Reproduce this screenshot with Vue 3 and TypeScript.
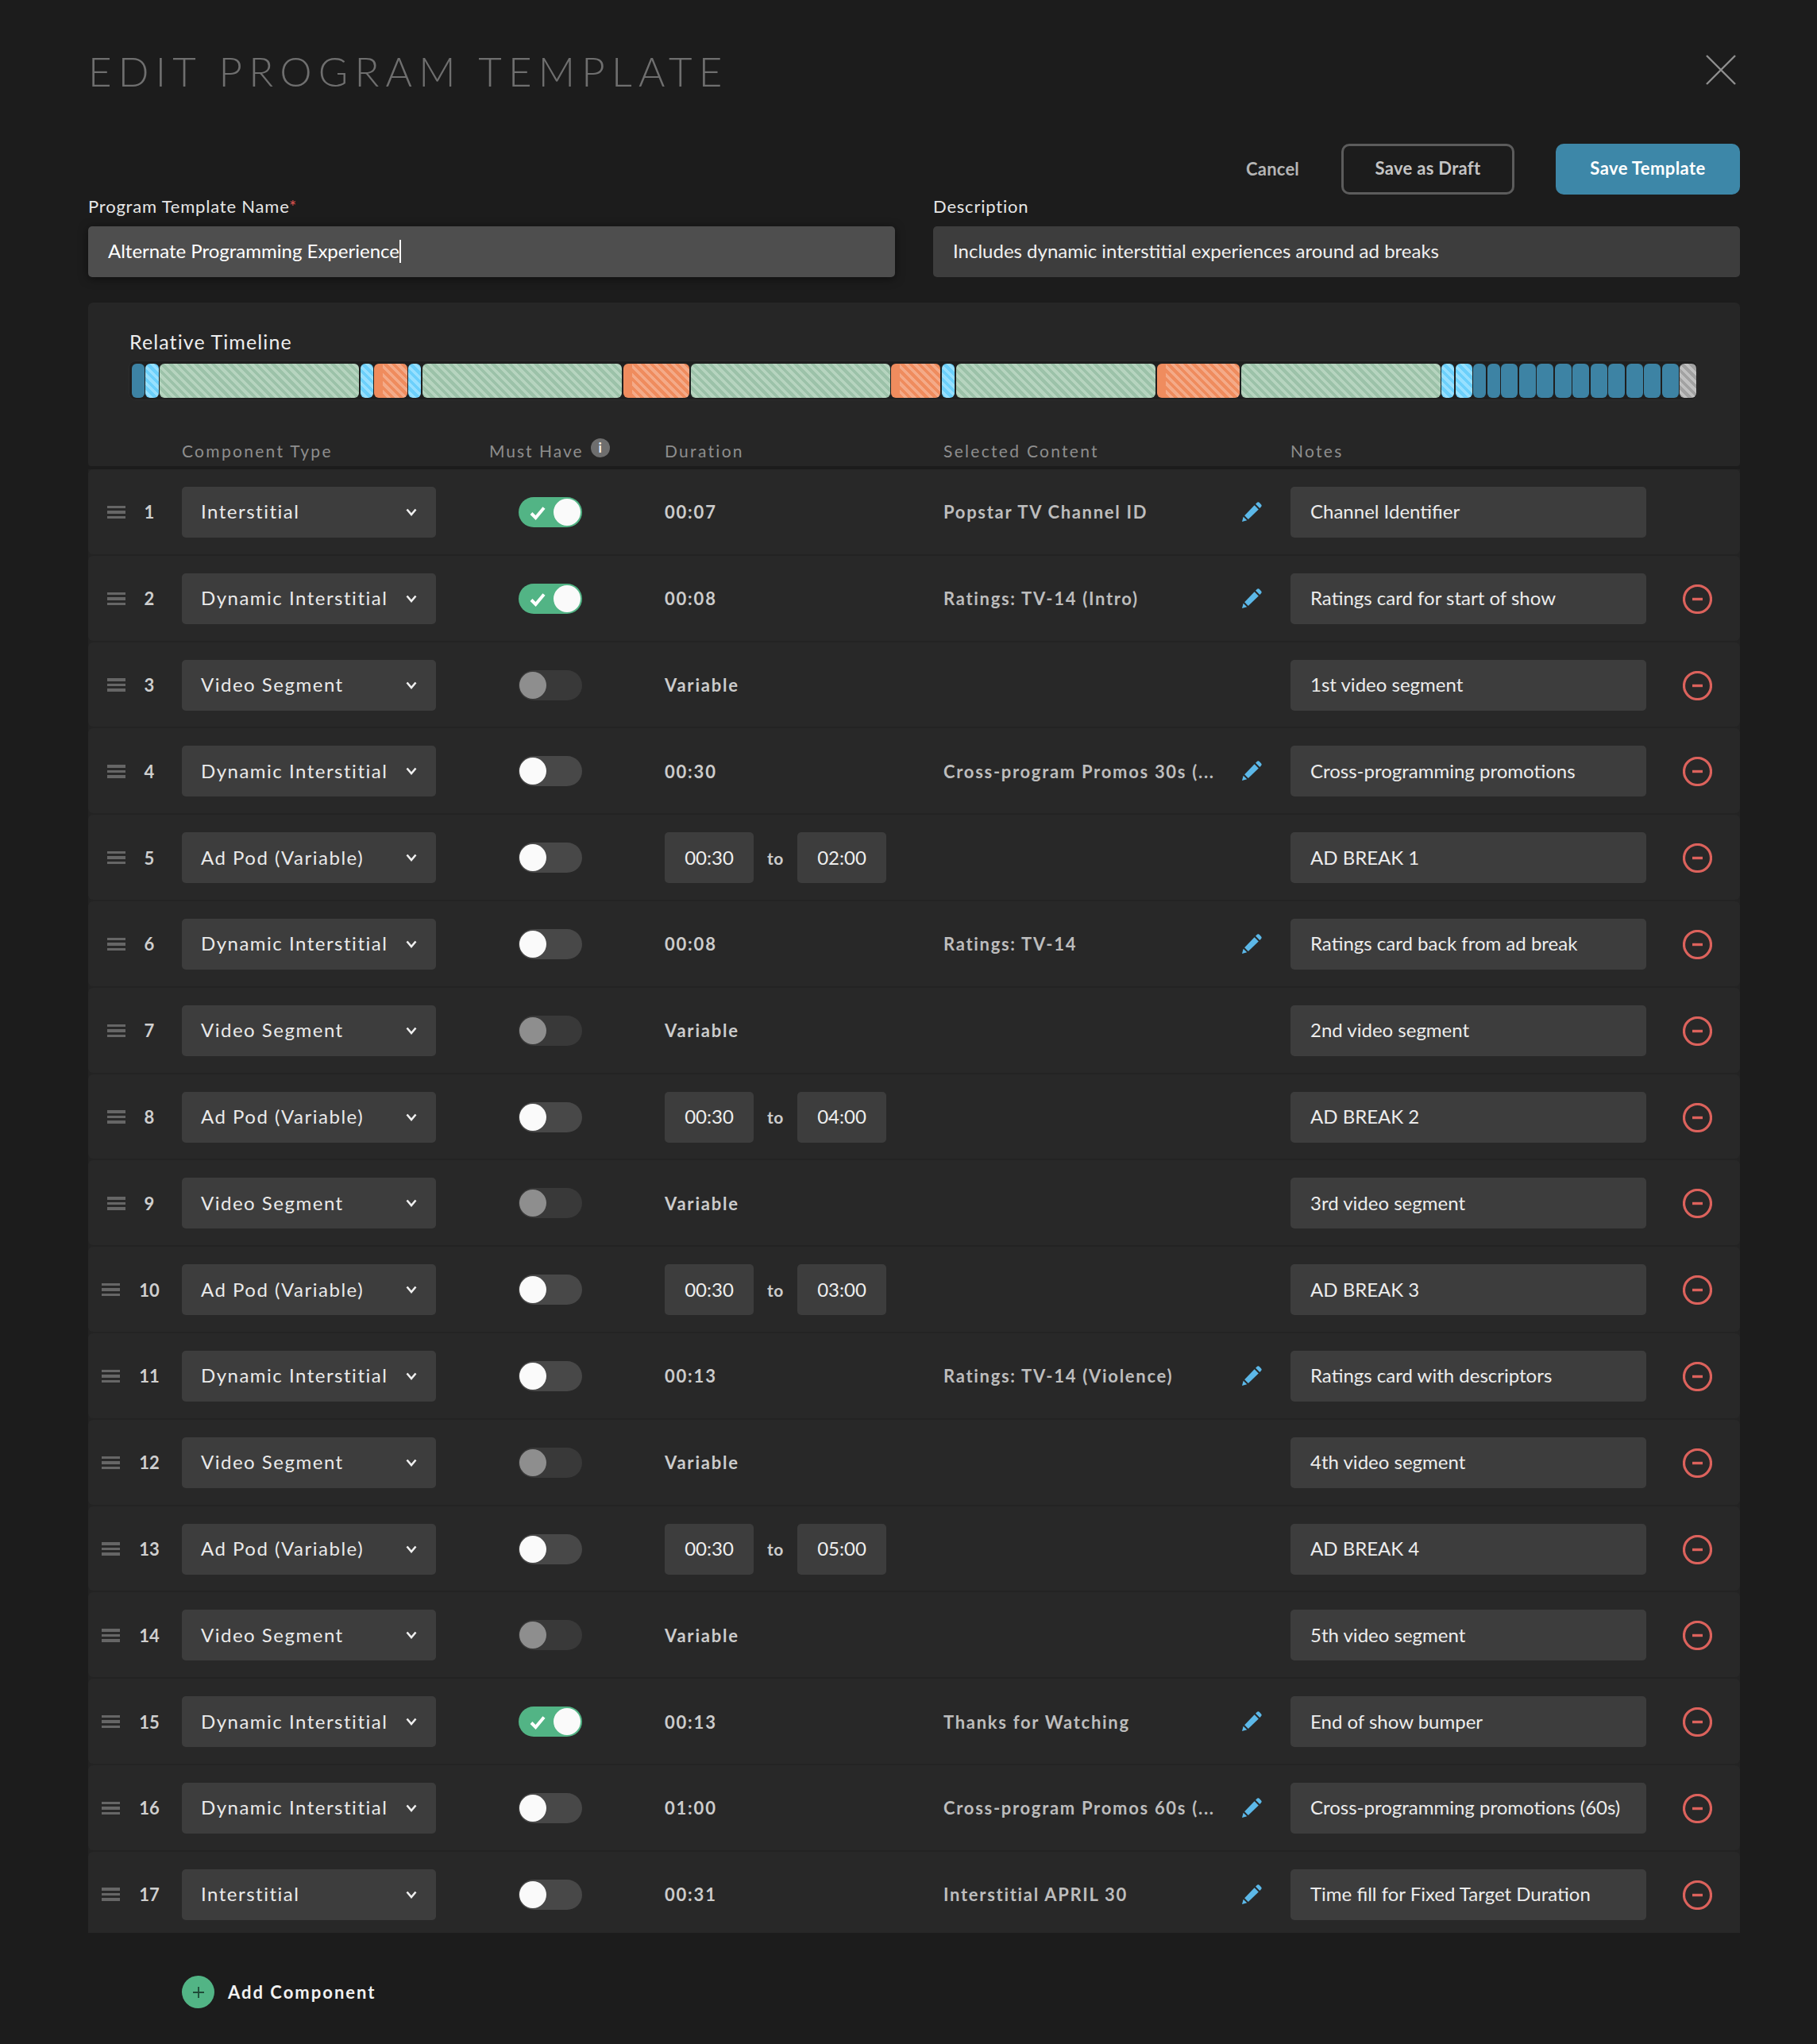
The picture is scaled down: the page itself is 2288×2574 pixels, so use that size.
<script setup lang="ts">
type Toggle = 'on' | 'off' | 'dim'
interface Row {
  type: string
  toggle: Toggle
  dur?: string
  range?: [string, string]
  content?: string
  note: string
  locked?: boolean
}
const rows: Row[] = [
  { type: 'Interstitial', toggle: 'on', dur: '00:07', content: 'Popstar TV Channel ID', note: 'Channel Identifier', locked: true },
  { type: 'Dynamic Interstitial', toggle: 'on', dur: '00:08', content: 'Ratings: TV-14 (Intro)', note: 'Ratings card for start of show' },
  { type: 'Video Segment', toggle: 'dim', dur: 'Variable', note: '1st video segment' },
  { type: 'Dynamic Interstitial', toggle: 'off', dur: '00:30', content: 'Cross-program Promos 30s (...', note: 'Cross-programming promotions' },
  { type: 'Ad Pod (Variable)', toggle: 'off', range: ['00:30', '02:00'], note: 'AD BREAK 1' },
  { type: 'Dynamic Interstitial', toggle: 'off', dur: '00:08', content: 'Ratings: TV-14', note: 'Ratings card back from ad break' },
  { type: 'Video Segment', toggle: 'dim', dur: 'Variable', note: '2nd video segment' },
  { type: 'Ad Pod (Variable)', toggle: 'off', range: ['00:30', '04:00'], note: 'AD BREAK 2' },
  { type: 'Video Segment', toggle: 'dim', dur: 'Variable', note: '3rd video segment' },
  { type: 'Ad Pod (Variable)', toggle: 'off', range: ['00:30', '03:00'], note: 'AD BREAK 3' },
  { type: 'Dynamic Interstitial', toggle: 'off', dur: '00:13', content: 'Ratings: TV-14 (Violence)', note: 'Ratings card with descriptors' },
  { type: 'Video Segment', toggle: 'dim', dur: 'Variable', note: '4th video segment' },
  { type: 'Ad Pod (Variable)', toggle: 'off', range: ['00:30', '05:00'], note: 'AD BREAK 4' },
  { type: 'Video Segment', toggle: 'dim', dur: 'Variable', note: '5th video segment' },
  { type: 'Dynamic Interstitial', toggle: 'on', dur: '00:13', content: 'Thanks for Watching', note: 'End of show bumper' },
  { type: 'Dynamic Interstitial', toggle: 'off', dur: '01:00', content: 'Cross-program Promos 60s (...', note: 'Cross-programming promotions (60s)' },
  { type: 'Interstitial', toggle: 'off', dur: '00:31', content: 'Interstitial APRIL 30', note: 'Time fill for Fixed Target Duration' }
]
// [start, end, kind] in page pixels, taken from the timeline's scale
const spans: [number, number, string][] = [
  [166, 182, 'b'], [183, 200, 'l'], [201, 452, 'g'], [454, 470, 'l'], [471, 513, 'o'], [514, 530, 'l'],
  [532, 783, 'g'], [785, 868, 'o'], [870, 1121, 'g'], [1122, 1184, 'o'], [1186, 1202, 'l'], [1204, 1455, 'g'],
  [1457, 1561, 'o'], [1563, 1814, 'g'], [1815, 1831, 'l'], [1833, 1854, 'l'], [1855, 1871, 'b'], [1873, 1889, 'b'],
  [1890, 1911, 'b'], [1913, 1934, 'b'], [1935, 1956, 'b'], [1958, 1979, 'b'], [1980, 2001, 'b'], [2003, 2024, 'b'],
  [2025, 2046, 'b'], [2048, 2069, 'b'], [2070, 2091, 'b'], [2093, 2114, 'b'], [2115, 2136, 'a']
]
const segments = spans.map(([s, e, kind], i) => ({
  kind,
  style: { width: `${e - s}px`, marginLeft: `${i === 0 ? 0 : s - spans[i - 1][1]}px` }
}))
</script>

<template>
  <div class="page">
    <header class="titlebar">
      <h1 class="title">EDIT PROGRAM TEMPLATE</h1>
      <svg class="close" viewBox="0 0 38 38" width="38" height="38" fill="none" stroke="#8f8f8f" stroke-width="2.4">
        <path d="M1 1 37 37M37 1 1 37" />
      </svg>
    </header>

    <div class="actions">
      <span class="cancel">Cancel</span>
      <button class="btn draft">Save as Draft</button>
      <button class="btn save">Save Template</button>
    </div>

    <section class="fields">
      <div class="field">
        <label class="label">Program Template Name<span class="req">*</span></label>
        <div class="input focused"><span class="itext">Alternate Programming Experience</span><span class="caret"></span></div>
      </div>
      <div class="field">
        <label class="label">Description</label>
        <div class="input"><span class="itext">Includes dynamic interstitial experiences around ad breaks</span></div>
      </div>
    </section>

    <section class="panel">
      <div class="tl-label">Relative Timeline</div>
      <div class="timeline">
        <span v-for="(s, i) in segments" :key="i" class="seg" :class="s.kind" :style="s.style"></span>
      </div>
      <div class="cols heads">
        <span></span>
        <span>Component Type</span>
        <span class="must">Must Have <i class="info">i</i></span>
        <span>Duration</span>
        <span>Selected Content</span>
        <span>Notes</span>
        <span></span>
      </div>
    </section>

    <section class="rows">
      <div v-for="(r, i) in rows" :key="i" class="cols row">
        <div class="grip">
          <span class="bars"><b></b><b></b><b></b></span>
          <span class="num">{{ i + 1 }}</span>
        </div>
        <div class="select">
          <span class="itext">{{ r.type }}</span>
          <svg viewBox="0 0 14 10" width="14" height="10" fill="none" stroke="#f0f0f0" stroke-width="2.6">
            <path d="M1.5 1.5 7 8l5.500-6.500" />
          </svg>
        </div>
        <div class="tcell">
          <div class="toggle" :class="r.toggle">
            <svg v-if="r.toggle === 'on'" class="check" viewBox="0 0 20 18" width="20" height="18" fill="none" stroke="#fff" stroke-width="4">
              <path d="M2 9.500 7.500 15 18 2.500" />
            </svg>
            <span class="knob"></span>
          </div>
        </div>
        <div class="dur">
          <template v-if="r.range">
            <span class="time">{{ r.range[0] }}</span>
            <span class="to">to</span>
            <span class="time">{{ r.range[1] }}</span>
          </template>
          <template v-else>{{ r.dur }}</template>
        </div>
        <div class="content">
          <template v-if="r.content">
            <span class="ctext">{{ r.content }}</span>
            <svg class="pencil" viewBox="0 0 24 24" width="25" height="25" fill="#5cb8e8">
              <path d="M0 24 1.600 18 6 22.400Z" />
              <path d="M3 16.500 15 4l5 5L7.500 21Z" />
              <path d="M16.400 2.600 18 1c.9-.9 2.200-.9 3 0l2 2c.9.9.9 2.100 0 3l-1.600 1.600Z" />
            </svg>
          </template>
        </div>
        <div class="note"><span class="itext">{{ r.note }}</span></div>
        <div class="rm">
          <svg v-if="!r.locked" viewBox="0 0 37 37" width="37" height="37" fill="none" stroke="#dc625c">
            <circle cx="18.500" cy="18.500" r="17" stroke-width="3.200" />
            <path d="M12 18.500h13" stroke-width="3.400" />
          </svg>
        </div>
      </div>
    </section>

    <div class="add">
      <span class="plus">
        <svg viewBox="0 0 16 16" width="16" height="16" stroke="#1f4a38" stroke-width="1.800"><path d="M8 1v14M1 8h14" /></svg>
      </span>
      <span>Add Component</span>
    </div>
  </div>
</template>

<style>
html, body { margin: 0; background: #1c1c1c; }
</style>

<style scoped>
.page {
  box-sizing: border-box;
  width: 2288px;
  height: 2574px;
  padding: 0 97px 0 111px;
  background: #1c1c1c;
  font-family: Lato, "Open Sans", sans-serif;
  color: #eee;
}
.titlebar {
  height: 181px;
  display: flex;
  justify-content: space-between;
  align-items: flex-start;
}
.title {
  margin: 60px 0 0;
  font-size: 51px;
  line-height: 60px;
  font-weight: 300;
  letter-spacing: 8.2px;
  color: #6f6f6f;
  white-space: nowrap;
}
.close { margin: 69px 5px 0 0; }
.actions {
  height: 64px;
  display: flex;
  justify-content: flex-end;
  align-items: center;
}
.cancel { font-size: 22px; font-weight: 700; letter-spacing: .2px; color: #b5b5b5; margin: -2px 53px 0 0; }
.btn {
  box-sizing: border-box;
  height: 64px;
  padding: 0 0 3px;
  border-radius: 10px;
  font: 700 22px Lato, sans-serif;
}
.draft { width: 218px; background: transparent; border: 3px solid #5c5c5c; color: #c4c4c4; margin-right: 52px; letter-spacing: .3px; }
.save { width: 232px; background: #3d87a8; border: 0; color: #fff; letter-spacing: .4px; }
.fields { display: grid; grid-template-columns: 1016px 1016px; gap: 48px; }
.label { display: block; height: 40px; line-height: 30px; font-size: 22px; letter-spacing: .8px; color: #e6e6e6; }
.req { color: #d9534f; }
.input {
  box-sizing: border-box;
  height: 64px;
  padding: 0 25px 2px;
  display: flex;
  align-items: center;
  background: #3d3d3d;
  border-radius: 5px;
  font-size: 24px;
  color: #f0f0f0;
}
.itext { position: relative; top: -1px; }
.focused { background: #4e4e4e; box-shadow: 0 2px 12px rgba(0, 0, 0, .5); color: #fff; }
.caret { width: 2px; height: 29px; background: #fff; }
.panel {
  margin-top: 32px;
  height: 206px;
  background: #262626;
  border-radius: 6px 6px 4px 4px;
  overflow: hidden;
}
.tl-label { margin: 33px 0 0 52px; font-size: 25px; line-height: 32px; color: #eee; letter-spacing: 1.1px; }
.timeline {
  box-sizing: border-box;
  display: flex;
  width: 1974px;
  height: 48px;
  margin: 9px 0 0 52px;
  padding: 3px 0 2px 3px;
  background: #1f1f1f;
  border-radius: 8px;
  box-shadow: 0 0 0 1px #2c2c2c;
}
.seg { display: block; height: 43px; border-radius: 6px; flex: none; }
.b { background: #3d83a4; }
.l { background: repeating-linear-gradient(45deg, #6cd0fb 0 3.800px, #97e0ff 3.800px 7.600px); }
.g { background: repeating-linear-gradient(45deg, #9cc2a9 0 3.800px, #b6d4bf 3.800px 7.600px); }
.o { background: linear-gradient(90deg, #ef8c5e 11px, transparent 11px), repeating-linear-gradient(45deg, #ef8c5e 0 3.800px, #f4aa88 3.800px 7.600px); }
.a { background: repeating-linear-gradient(45deg, #a2a2a2 0 3.800px, #c0c0c0 3.800px 7.600px); }
.cols {
  display: grid;
  grid-template-columns: 118px 320px 288px 351px 437px 448px 118px;
  align-items: center;
}
.heads {
  margin-top: 49px;
  height: 30px;
  font-size: 21px;
  letter-spacing: 2.300px;
  color: #8e8e8e;
}
.must { padding-left: 67px; display: flex; align-items: center; gap: 9px; white-space: nowrap; letter-spacing: 2px; }
.info {
  width: 24px;
  height: 24px;
  margin-top: -6px;
  border-radius: 50%;
  background: #6e6e6e;
  color: #f2f2f2;
  font: 700 17px/24px Lato, sans-serif;
  text-align: center;
  letter-spacing: 0;
}
.rows {
  margin-top: 4px;
  height: 1843px;
  overflow: hidden;
  display: flex;
  flex-direction: column;
  gap: 2px;
  background: #232323;
}
.row {
  flex: none;
  box-sizing: border-box;
  height: 106.800px;
  padding-top: 1.200px;
  background: #282828;
  border-radius: 6px;
}
.grip { display: flex; justify-content: center; align-items: center; gap: 24px; padding-right: 11px; }
.bars { display: flex; flex-direction: column; gap: 3px; width: 23px; }
.bars b { display: block; height: 3.500px; background: #666; }
.num { font-size: 22px; font-weight: 700; color: #cfcfcf; }
.select {
  box-sizing: border-box;
  height: 64px;
  padding: 0 24px;
  display: flex;
  align-items: center;
  justify-content: space-between;
  background: #3d3d3d;
  border-radius: 5px;
  font-size: 24px;
  letter-spacing: 1.500px;
  color: #eaeaea;
  white-space: nowrap;
}
.tcell { padding-left: 104px; }
.toggle {
  position: relative;
  width: 80px;
  height: 38px;
  border-radius: 19px;
  background: #484848;
}
.toggle.on { background: #52b485; }
.toggle.dim { background: #393939; }
.knob {
  position: absolute;
  top: 2px;
  left: 1px;
  width: 34px;
  height: 34px;
  border-radius: 50%;
  background: #fafafa;
}
.toggle.on .knob { left: 44px; }
.toggle.dim .knob { background: #8e8e8e; }
.check { position: absolute; left: 14px; top: 11px; }
.dur {
  display: flex;
  align-items: center;
  font-size: 22px;
  font-weight: 700;
  letter-spacing: 1.800px;
  color: #cccccc;
}
.time {
  box-sizing: border-box;
  width: 112px;
  height: 64px;
  padding-bottom: 2px;
  background: #3d3d3d;
  border-radius: 5px;
  display: flex;
  align-items: center;
  justify-content: center;
  font-size: 24px;
  font-weight: 400;
  letter-spacing: 0;
  color: #eee;
}
.to { width: 55px; text-align: center; font-size: 21px; letter-spacing: .5px; }
.content { display: flex; align-items: center; position: relative; font-size: 22px; font-weight: 700; letter-spacing: 1.700px; color: #bdbdbd; }
.ctext { white-space: nowrap; }
.pencil { position: absolute; left: 376px; top: 50%; margin-top: -13px; }
.note {
  box-sizing: border-box;
  height: 64px;
  padding: 0 25px;
  display: flex;
  align-items: center;
  background: #3d3d3d;
  border-radius: 5px;
  font-size: 24px;
  color: #ececec;
  white-space: nowrap;
}
.rm { padding-left: 46px; height: 37px; margin-top: 1px; }
.add {
  display: flex;
  align-items: center;
  gap: 17px;
  margin: 54px 0 0 118px;
  font-size: 22px;
  font-weight: 700;
  letter-spacing: 2px;
  color: #f2f2f2;
}
.plus {
  width: 41px;
  height: 41px;
  border-radius: 50%;
  background: #52b485;
  display: flex;
  align-items: center;
  justify-content: center;
}
</style>
